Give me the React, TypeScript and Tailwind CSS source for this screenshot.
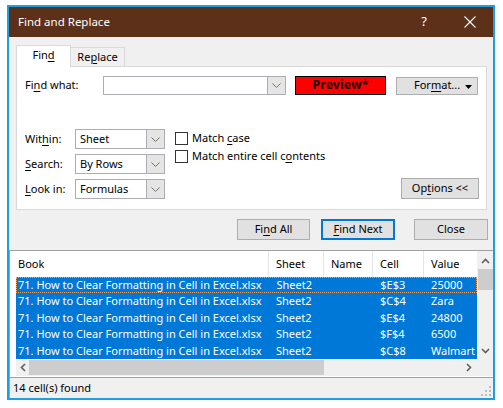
import React from "react";

const FONT = { fontFamily: '"Noto Sans", "Open Sans", sans-serif' };

function U({ children }: { children: React.ReactNode }) {
  return <span className="underline decoration-1 underline-offset-[2px]">{children}</span>;
}

function ChevronDown({ color = "#606060" }: { color?: string }) {
  return (
    <svg width="9" height="5" viewBox="0 0 9 5">
      <path d="M0.5 0.5 L4.5 4.5 L8.5 0.5" stroke={color} fill="none" strokeWidth="1" />
    </svg>
  );
}

function Select({ value }: { value: string }) {
  return (
    <div className="w-[90px] h-[20px] border border-[#ABADB3] bg-white flex">
      <div className="flex-1 pl-[4px] leading-[18px]">{value}</div>
      <div className="w-[18px] bg-[#E5E5E5] border-l border-[#ABADB3] flex items-center justify-center">
        <ChevronDown color="#707070" />
      </div>
    </div>
  );
}

function Checkbox({ children }: { children: React.ReactNode }) {
  return (
    <div className="flex items-center h-[18px]">
      <div className="w-[13px] h-[13px] border border-[#333333] bg-white" />
      <div className="ml-[4px] leading-[18px]">{children}</div>
    </div>
  );
}

function Btn({ children, w, focused }: { children: React.ReactNode; w: string; focused?: boolean }) {
  return (
    <div
      className={
        "h-[21px] bg-[#E1E1E1] flex items-center justify-center " +
        w +
        (focused ? " border-2 border-[#0078D7]" : " border border-[#ADADAD]")
      }
    >
      {children}
    </div>
  );
}

const rows = [
  ["Sheet2", "$E$3", "25000"],
  ["Sheet2", "$C$4", "Zara"],
  ["Sheet2", "$E$4", "24800"],
  ["Sheet2", "$F$4", "6500"],
  ["Sheet2", "$C$8", "Walmart"],
];

export default function App() {
  return (
    <div className="w-[503px] h-[408px] bg-white overflow-hidden text-[11px] text-black" style={FONT}>
      <div className="ml-[7px] mt-[5px] w-[488px] h-[395px] border-2 border-[#1BA1E2] flex flex-col">
        {/* Title bar */}
        <div className="h-[30px] bg-[#5C3019] text-white flex items-center">
          <div className="pl-[9px] text-[11.5px]">Find and Replace</div>
          <div className="ml-auto flex h-full">
            <div className="w-[46px] flex items-center justify-center text-[13px]">?</div>
            <div className="w-[46px] flex items-center justify-center">
              <svg width="12" height="12" viewBox="0 0 12 12">
                <path d="M0.5 0.5 L11.5 11.5 M11.5 0.5 L0.5 11.5" stroke="#ffffff" strokeWidth="1.1" fill="none" />
              </svg>
            </div>
          </div>
        </div>

        {/* Body */}
        <div className="flex-1 bg-[#F0F0F0] flex flex-col">
          <div className="pl-[7px] pr-[6px] pt-[8px]">
            {/* Tabs */}
            <div className="flex items-end h-[21px]">
              <div className="relative z-10 w-[55px] h-[22px] -mb-px bg-white border border-b-0 border-[#D9D9D9] flex items-center justify-center pb-[2px]">
                Fin<U>d</U>
              </div>
              <div className="w-[54px] h-[19px] bg-[#F0F0F0] border border-l-0 border-b-0 border-[#D9D9D9] flex items-center justify-center">
                Re<U>p</U>lace
              </div>
            </div>
            {/* Panel */}
            <div className="h-[144px] border border-[#D9D9D9] bg-white flex flex-col pt-[9px] pl-[8px] pr-[7px]">
              <div className="flex items-center h-[19px]">
                <div className="w-[78px]">
                  Fi<U>n</U>d what:
                </div>
                <div className="w-[183px] h-[19px] border border-[#ABADB3] bg-white flex justify-end">
                  <div className="w-[18px] h-full bg-[#E5E5E5] border-l border-[#ABADB3] flex items-center justify-center">
                    <ChevronDown color="#707070" />
                  </div>
                </div>
                <div className="ml-[9px] w-[91px] h-[19px] bg-[#FF0000] border border-black flex items-center justify-center font-bold text-[#1a0000] text-[12.5px]">
                  Preview*
                </div>
                <div className="ml-[10px] w-[82px] h-[18px] bg-[#E1E1E1] border border-[#ADADAD] flex items-center relative">
                  <div className="pl-[17px]">
                    For<U>m</U>at...
                  </div>
                  <svg className="absolute right-[5px] top-[7px]" width="7" height="4" viewBox="0 0 7 4">
                    <path d="M0 0 L7 0 L3.5 4 Z" fill="#000" />
                  </svg>
                </div>
              </div>

              <div className="flex mt-[34px]">
                <div className="flex flex-col gap-[5px]">
                  <div className="flex items-center h-[20px]">
                    <div className="w-[50px]">
                      Wit<U>h</U>in:
                    </div>
                    <Select value="Sheet" />
                  </div>
                  <div className="flex items-center h-[20px]">
                    <div className="w-[50px]">
                      <U>S</U>earch:
                    </div>
                    <Select value="By Rows" />
                  </div>
                  <div className="flex items-center h-[20px]">
                    <div className="w-[50px]">
                      <U>L</U>ook in:
                    </div>
                    <Select value="Formulas" />
                  </div>
                </div>
                <div className="ml-[10px] flex flex-col">
                  <Checkbox>
                    Match <U>c</U>ase
                  </Checkbox>
                  <Checkbox>
                    Match entire cell c<U>o</U>ntents
                  </Checkbox>
                </div>
                <div className="ml-auto self-end">
                  <Btn w="w-[78px]">
                    Op<U>t</U>ions &lt;&lt;
                  </Btn>
                </div>
              </div>
            </div>

            {/* Buttons */}
            <div className="flex justify-end mt-[9px] mb-[10px] mr-[-1px]">
              <Btn w="w-[73px]">
                Fi<U>n</U>d All
              </Btn>
              <div className="ml-[11px]">
                <Btn w="w-[74px]" focused>
                  <U>F</U>ind Next
                </Btn>
              </div>
              <div className="ml-[19px]">
                <Btn w="w-[74px]">Close</Btn>
              </div>
            </div>
          </div>

          {/* Results list */}
          <div className="flex-1 flex flex-col border-t border-l border-[#A0A0A0] bg-white min-h-0">
            <div className="flex h-[108px]">
              <div className="flex-1 flex flex-col overflow-hidden pl-[6px]">
                <div className="flex h-[26px] items-center shrink-0">
                  <div className="w-[253px] h-full border-r border-[#E5E5E5] pl-[2px] flex items-center">Book</div>
                  <div className="w-[55px] h-full border-r border-[#E5E5E5] pl-[7px] flex items-center">Sheet</div>
                  <div className="w-[49px] h-full border-r border-[#E5E5E5] pl-[7px] flex items-center">Name</div>
                  <div className="w-[51px] h-full border-r border-[#E5E5E5] pl-[7px] flex items-center">Cell</div>
                  <div className="w-[52px] h-full pl-[7px] flex items-center">Value</div>
                </div>
                <div className="flex-1 overflow-hidden">
                  {rows.map((r, i) => (
                    <div
                      key={i}
                      className={
                        "flex h-[16.4px] items-center bg-[#0078D7] text-white whitespace-nowrap " +
                        (i === 0 ? "border border-dotted border-[#F5A35A]" : "")
                      }
                    >
                      <div className={"w-[253px] overflow-hidden " + (i === 0 ? "pl-[1px]" : "pl-[2px]")}>
                        71. How to Clear Formatting in Cell in Excel.xlsx
                      </div>
                      <div className="w-[55px] pl-[7px]">{r[0]}</div>
                      <div className="w-[49px] pl-[7px]"></div>
                      <div className="w-[51px] pl-[7px]">{r[1]}</div>
                      <div className="w-[52px] pl-[7px]">{r[2]}</div>
                    </div>
                  ))}
                </div>
              </div>
              {/* Vertical scrollbar */}
              <div className="w-[16px] bg-[#F0F0F0] flex flex-col items-center">
                <div className="h-[17px] flex items-center justify-center pt-[2px]">
                  <svg width="9" height="6" viewBox="0 0 9 6">
                    <path d="M1 5 L4.5 1.5 L8 5" stroke="#606060" strokeWidth="1.6" fill="none" />
                  </svg>
                </div>
                <div className="mt-[1px] w-[15px] h-[21px] bg-[#CDCDCD]" />
                <div className="mt-auto h-[17px] flex items-center justify-center">
                  <svg width="9" height="6" viewBox="0 0 9 6">
                    <path d="M1 1 L4.5 4.5 L8 1" stroke="#606060" strokeWidth="1.6" fill="none" />
                  </svg>
                </div>
              </div>
            </div>
            {/* Horizontal scrollbar */}
            <div className="flex h-[17px]">
              <div className="flex-1 flex items-center bg-[#F0F0F0] ml-[6px]">
                <div className="w-[13px] h-full flex items-center justify-center">
                  <svg width="6" height="9" viewBox="0 0 6 9">
                    <path d="M5 1 L1.5 4.5 L5 8" stroke="#606060" strokeWidth="1.6" fill="none" />
                  </svg>
                </div>
                <div className="w-[295px] h-[15px] bg-[#CDCDCD]" />
                <div className="ml-auto w-[17px] h-full flex items-center justify-center">
                  <svg width="6" height="9" viewBox="0 0 6 9">
                    <path d="M1 1 L4.5 4.5 L1 8" stroke="#606060" strokeWidth="1.6" fill="none" />
                  </svg>
                </div>
              </div>
              <div className="w-[16px] bg-[#F0F0F0]" />
            </div>
          </div>

          {/* Status bar */}
          <div className="h-[21px] border-t border-l border-[#A0A0A0] bg-[#F0F0F0] flex items-center relative">
            <div className="pl-[3px] pt-[1px]">14 cell(s) found</div>
            <svg className="absolute right-[2px] bottom-[2px]" width="10" height="10" viewBox="0 0 10 10">
              <rect x="8" y="0" width="2" height="2" fill="#BDBDBD" />
              <rect x="4" y="4" width="2" height="2" fill="#BDBDBD" />
              <rect x="8" y="4" width="2" height="2" fill="#BDBDBD" />
              <rect x="0" y="8" width="2" height="2" fill="#BDBDBD" />
              <rect x="4" y="8" width="2" height="2" fill="#BDBDBD" />
              <rect x="8" y="8" width="2" height="2" fill="#BDBDBD" />
            </svg>
          </div>
        </div>
      </div>
    </div>
  );
}
